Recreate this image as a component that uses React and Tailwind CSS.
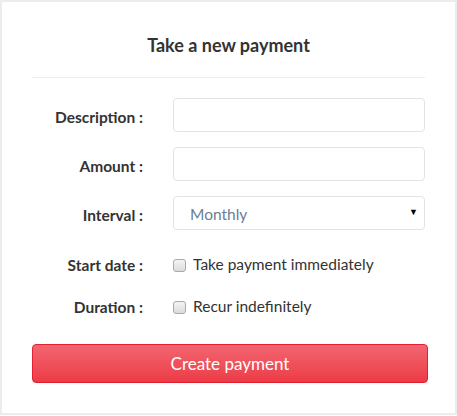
import { useState } from 'react';

const font = { fontFamily: 'Lato, "Noto Sans", sans-serif' };

const Label = ({ children, className = '' }) => (
  <label className={`w-[111px] shrink-0 text-right text-[15.5px] font-bold text-[#333] ${className}`}>{children}</label>
);

const Check = ({ text }) => (
  <div className="flex items-center">
    <span className="w-[13px] h-[13px] rounded-[3px] border border-[#a9a9a9] bg-gradient-to-b from-[#f4f4f4] to-[#dcdcdc]" />
    <span className="ml-[7px] text-[15.5px] text-[#333]">{text}</span>
  </div>
);

export default function App() {
  const [interval, setInterval] = useState('Monthly');

  return (
    <div className="w-[457px] h-[416px] bg-white" style={font}>
      <div className="h-[415px] border-2 border-[#ececec] px-[30px] pt-[31px]">
        <h1 className="text-center text-[18px] leading-6 font-bold text-[#333]">Take a new payment</h1>
        <div className="mt-[20px] h-px w-[393px] bg-[#eeeeee]" />

        <div className="mt-[20px] flex flex-col">
          <div className="flex items-center gap-[30px]">
            <Label className="pt-[6px]">Description :</Label>
            <input className="w-[252px] h-[34px] rounded-[4px] border border-[#e3e3e3] px-3 outline-none" />
          </div>
          <div className="mt-[15px] flex items-center gap-[30px]">
            <Label className="pt-[6px]">Amount :</Label>
            <input className="w-[252px] h-[34px] rounded-[4px] border border-[#e3e3e3] px-3 outline-none" />
          </div>
          <div className="mt-[15px] flex items-center gap-[30px]">
            <Label className="pt-[6px]">Interval :</Label>
            <div className="relative w-[252px]">
              <select
                value={interval}
                onChange={(e) => setInterval(e.target.value)}
                className="w-full h-[34px] appearance-none rounded-[4px] border border-[#e3e3e3] bg-white pl-[16px] pt-[3px] text-[15.5px] text-[#6a8097] outline-none"
              >
                <option>Weekly</option>
                <option>Monthly</option>
                <option>Yearly</option>
              </select>
              <span className="pointer-events-none absolute right-[7px] top-[9px] text-[9px] text-black">▼</span>
            </div>
          </div>
          <div className="mt-[25px] h-[20px] flex items-center gap-[30px]">
            <Label className="pt-[2px]">Start date :</Label>
            <Check text="Take payment immediately" />
          </div>
          <div className="mt-[22px] h-[20px] flex items-center gap-[30px]">
            <Label className="pt-[2px]">Duration :</Label>
            <Check text="Recur indefinitely" />
          </div>
        </div>

        <button className="mt-[27px] w-[396px] h-[39px] rounded-[4px] border border-[#e2202f] bg-gradient-to-b from-[#f26570] to-[#ec3a46] text-[17px] text-white">
          Create payment
        </button>
      </div>
    </div>
  );
}
